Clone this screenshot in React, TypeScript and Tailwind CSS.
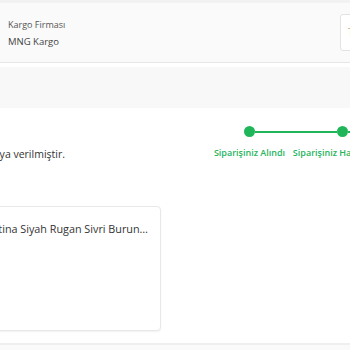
import React from 'react'

const steps = ['Siparişiniz Alındı', 'Siparişiniz Hazırlanıyor', 'Kargoya Verildi']

function Stepper() {
  return (
    <div className="flex shrink-0">
      {steps.map((s, i) => (
        <div key={s} className="flex w-[93px] shrink-0 flex-col items-center">
          <div className="flex w-full items-center">
            <div className={`h-[2px] flex-1 ${i === 0 ? 'bg-transparent' : 'bg-[#1fb65a]'}`} />
            <div className="h-[11px] w-[11px] rounded-full bg-[#1fb65a]" />
            <div className="h-[2px] flex-1 bg-[#1fb65a]" />
          </div>
          <div className="mt-[9px] whitespace-nowrap text-[9px] font-semibold text-[#27b45d]">{s}</div>
        </div>
      ))}
    </div>
  )
}

export default function App() {
  return (
    <div className="relative h-[350px] w-[350px] overflow-hidden bg-white font-['Open_Sans',sans-serif]">
      <div className="h-[3px] bg-[#f2f2f2]" />
      <div className="flex h-[60px] items-center justify-between border-b border-[#e6e6e6] bg-[#fafafa] pl-2">
        <div className="flex flex-col gap-[4px] pt-[2px]">
          <span className="text-[9px] text-[#555]">Kargo Firması</span>
          <span className="text-[9.5px] text-[#444]">MNG Kargo</span>
        </div>
        <div className="mr-[-40px] flex h-[37px] w-[50px] shrink-0 items-center rounded-[3px] border border-[#e3e3e3] bg-white pl-[7px]">
          <span className="text-[10px] text-[#d9a878]">T</span>
        </div>
      </div>
      <div className="mt-[4px] h-[41px] bg-[#f8f8f8]" />

      <div className="flex items-start pt-[18px]">
        <div className="flex w-[65px] shrink-0 justify-end pt-[21px]">
          <span className="shrink-0 whitespace-nowrap text-[10.5px] text-[#333]">Siparişiniz kargoya verilmiştir.</span>
        </div>
        <div className="ml-[138px]">
          <Stepper />
        </div>
      </div>

      <div className="mt-[43px] ml-[-10px] h-[125px] w-[171px] rounded-[4px] border border-[#e8e8e8] bg-white shadow-[0_1px_2px_rgba(0,0,0,0.06)]">
        <div className="flex w-[157px] justify-end overflow-hidden pt-[14px]">
          <span className="shrink-0 whitespace-nowrap text-[10.8px] text-[#333]">Stiletto Katina Siyah Rugan Sivri Burun…</span>
        </div>
      </div>

      <div className="mt-[12px] h-[2px] bg-[#efefef]" />
      <div className="h-[10px] bg-[#fafafa]" />
    </div>
  )
}
